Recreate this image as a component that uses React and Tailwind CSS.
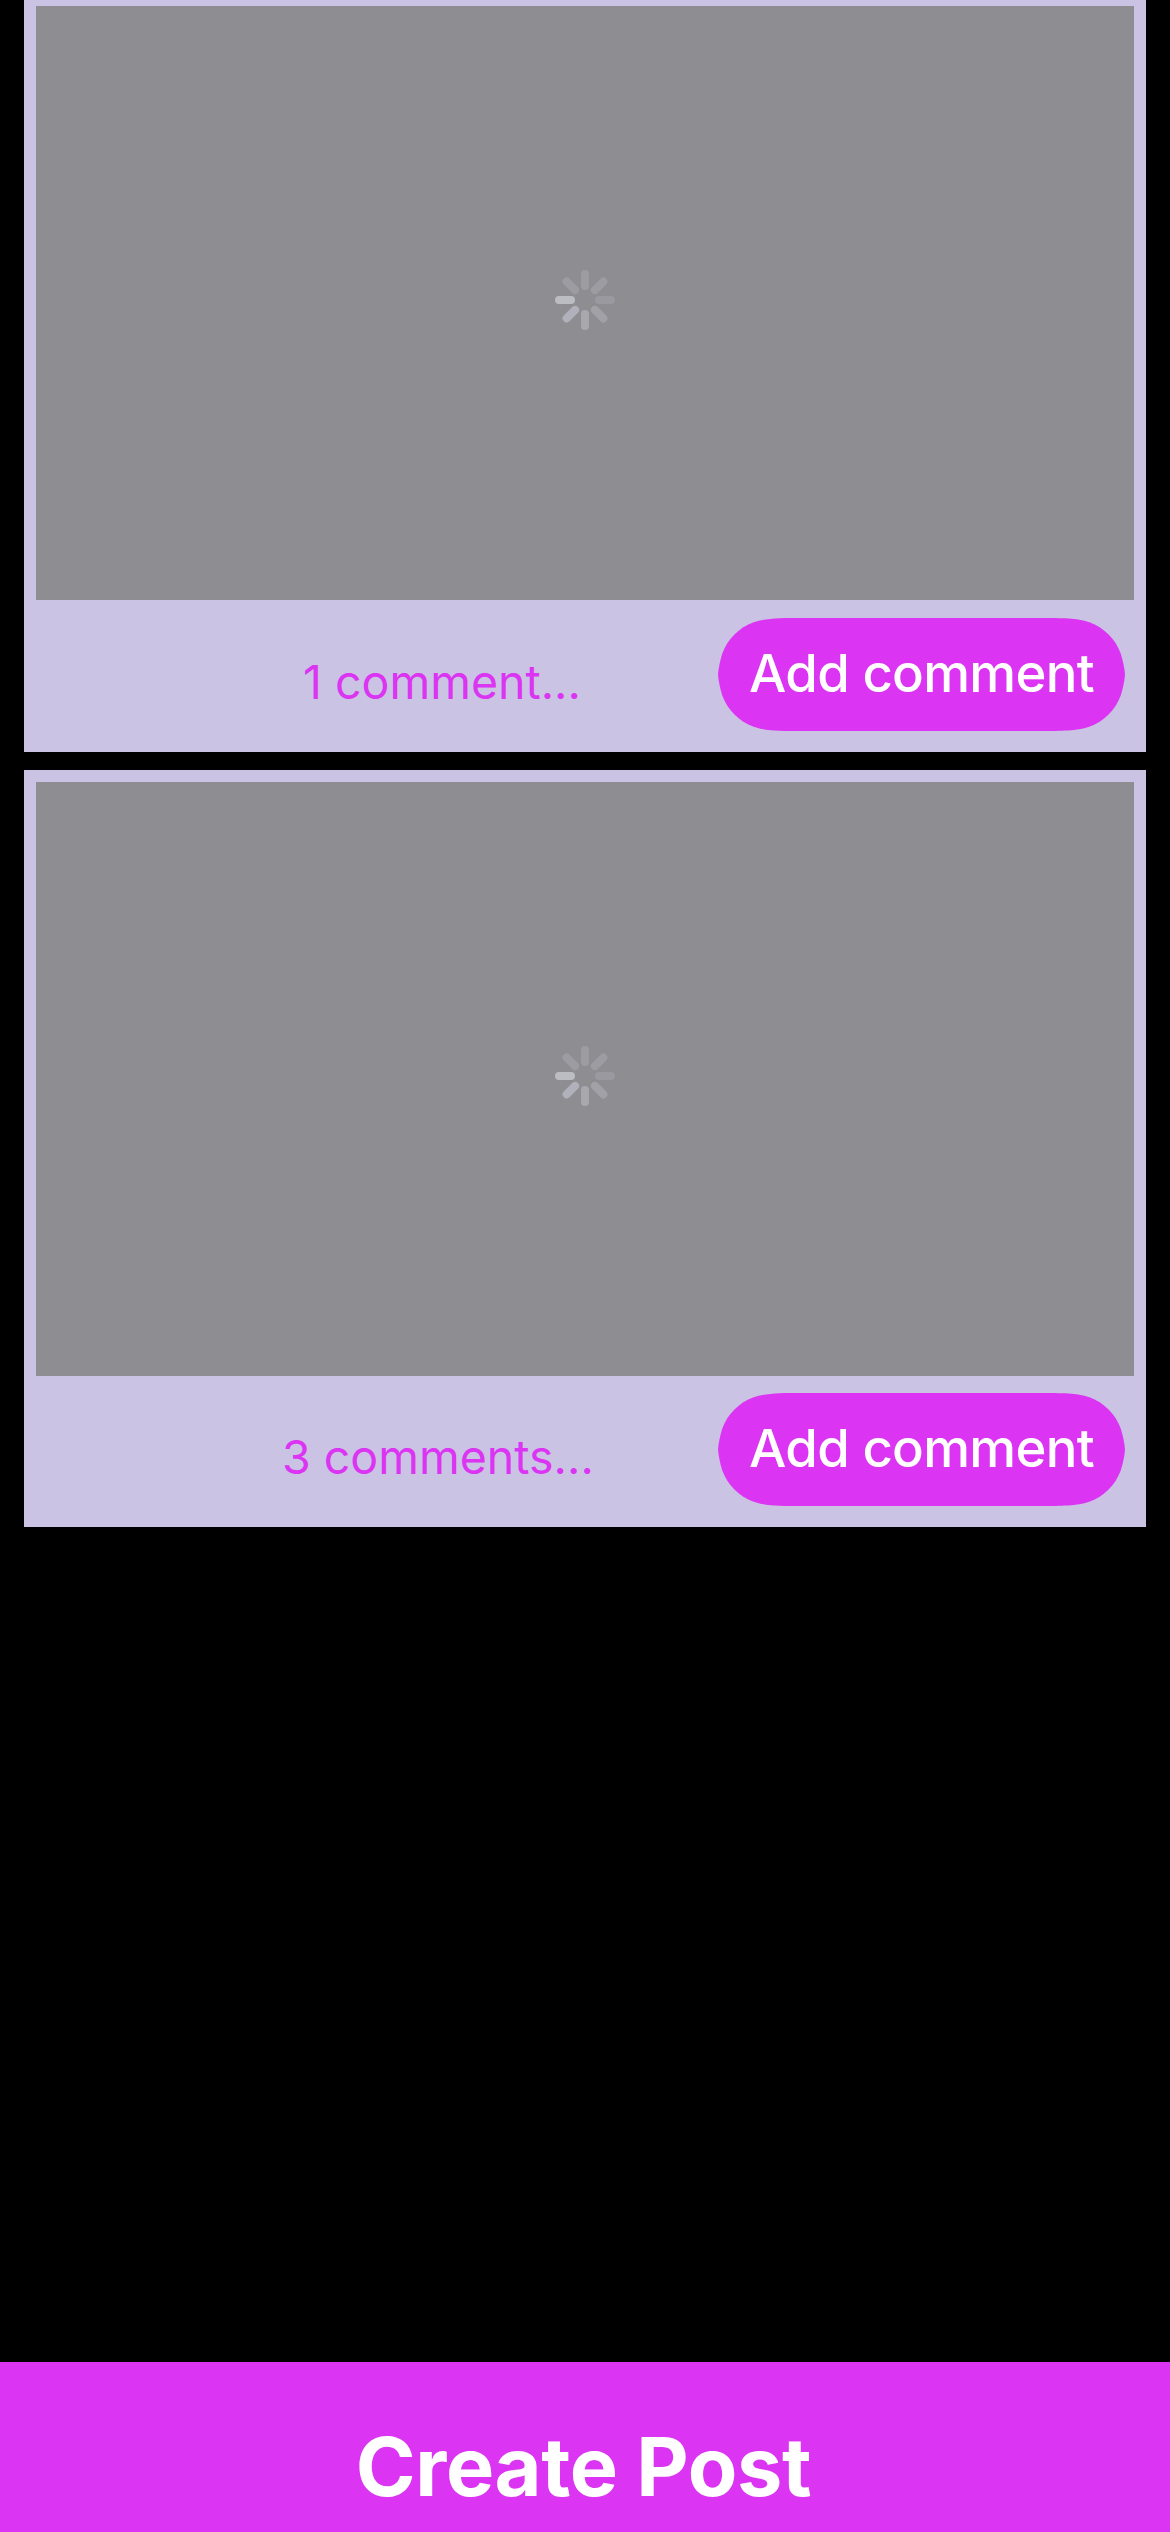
const petals = [
  { angle: 0, color: "#9d9ca2" },
  { angle: 45, color: "#9d9ca2" },
  { angle: 90, color: "#9a999f" },
  { angle: 135, color: "#a2a1a7" },
  { angle: 180, color: "#a9a8af" },
  { angle: 225, color: "#b1b1bc" },
  { angle: 270, color: "#bcbcc3" },
  { angle: 315, color: "#9d9ca2" },
];

function Spinner() {
  return (
    <svg className="mb-[6px] size-[60px]" viewBox="0 0 60 60">
      {petals.map((p) => (
        <rect key={p.angle} x="26" y="0" width="8" height="20" rx="4" fill={p.color} transform={`rotate(${p.angle} 30 30)`} />
      ))}
    </svg>
  );
}

function Post({ label, className, rowClass, labelClass }) {
  return (
    <article className={`mx-6 flex shrink-0 flex-col bg-[#cac3e3] px-3 ${className}`}>
      <div className="flex h-[594px] shrink-0 items-center justify-center bg-[#8e8d92]">
        <Spinner />
      </div>
      <div className={`flex items-start pr-[9px] ${rowClass}`}>
        <p className={`mt-[34px] flex-1 whitespace-nowrap text-[46.5px] leading-[60px] text-[#db34f2] ${labelClass}`}>{label}</p>
        <button className="h-[113px] w-[407px] shrink-0 whitespace-nowrap bg-[#db34f2] pb-px text-[52.7px] font-medium tracking-[-0.7px] text-white [clip-path:path('M0,56.5C0.5,50,2,43,4.2,35.7C9.5,21,21,9.5,35.7,4.2C49,0,61.5,0,86,0L321,0C345.5,0,358,0,371.3,4.2C386,9.5,397.5,21,402.8,35.7C405,43,406.5,50,407,56.5C406.5,63,405,70,402.8,77.3C397.5,92,386,103.5,371.3,108.8C358,113,345.5,113,321,113L86,113C61.5,113,49,113,35.7,108.8C21,103.5,9.5,92,4.2,77.3C2,70,0.5,63,0,56.5Z')]">
          Add comment
        </button>
      </div>
    </article>
  );
}

export default function App() {
  return (
    <main className="flex h-[2532px] w-[1170px] flex-col overflow-hidden bg-black font-['Inter',sans-serif]">
      <Post label="1 comment..." className="h-[752px] pt-[6px]" rowClass="pt-[18px]" labelClass="pl-[267px]" />
      <Post label="3 comments..." className="mt-[18px] h-[757px] pt-3" rowClass="pt-[17px]" labelClass="pl-[246px]" />
      <button className="mt-auto flex h-[170px] items-start justify-center bg-[#db34f2] pt-14 pr-[3px] text-[81px] leading-[98px] font-bold tracking-[-0.4px] text-white">
        Create Post
      </button>
    </main>
  );
}
